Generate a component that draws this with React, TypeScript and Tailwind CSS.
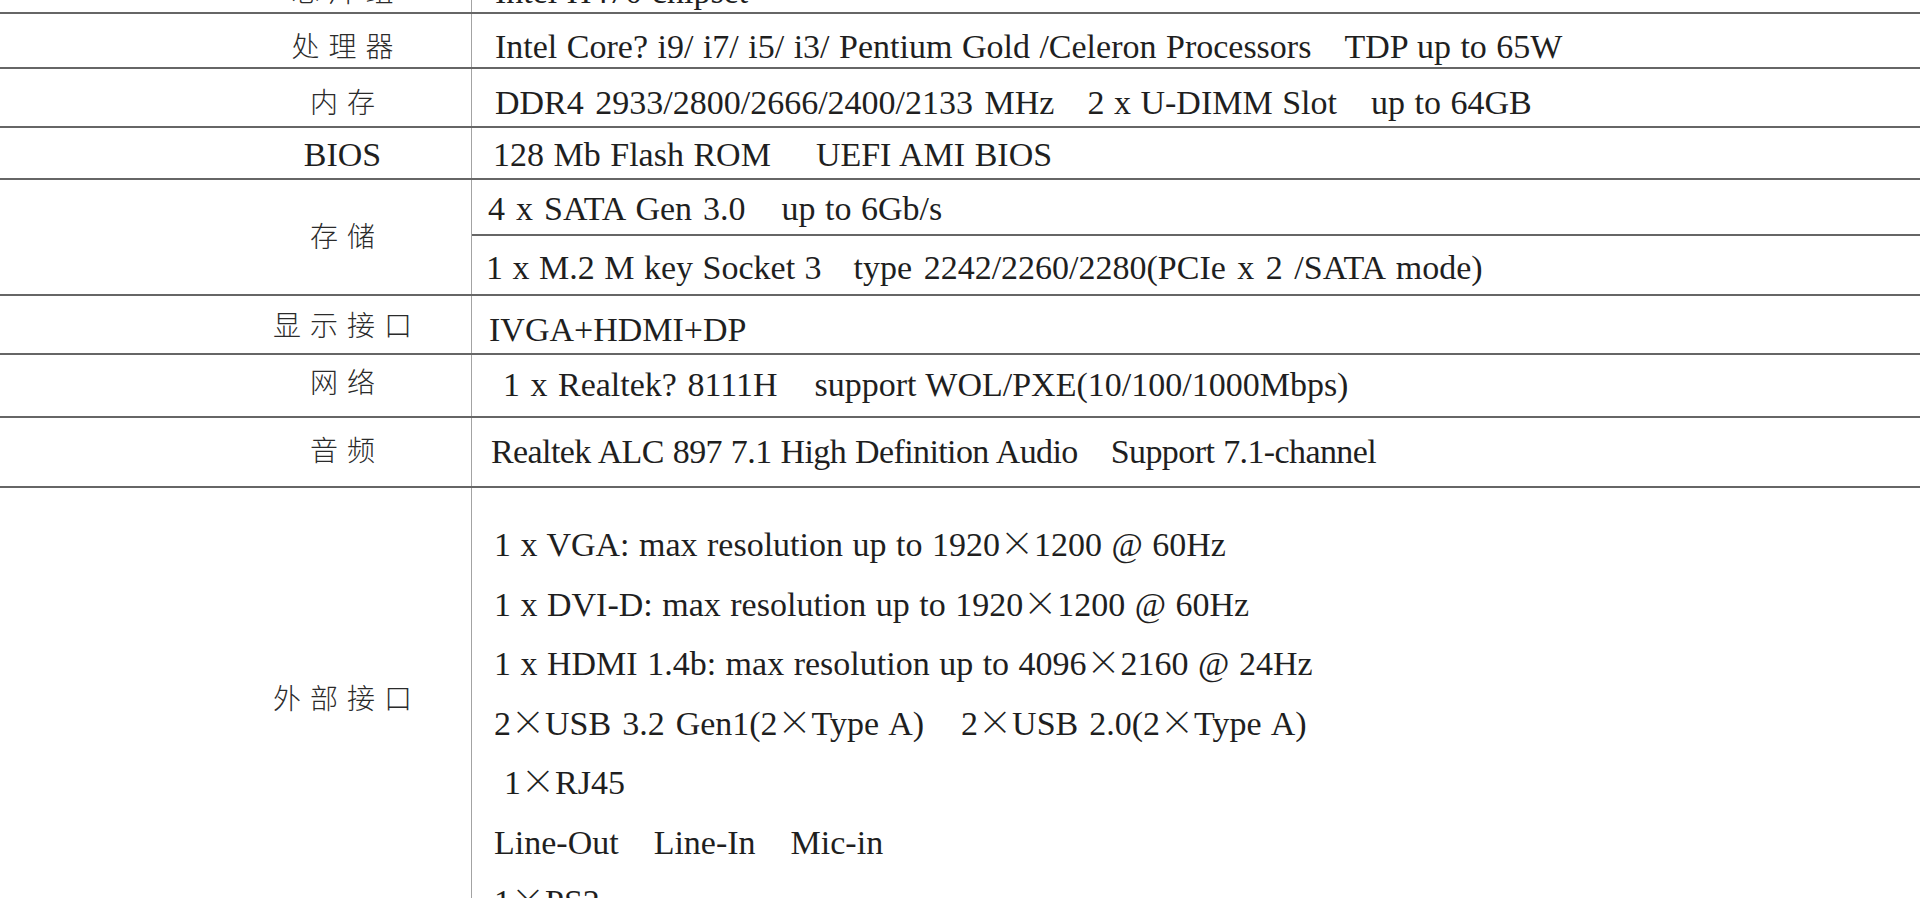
import React from "react";

const serif =
  "font-['Liberation_Serif','Times_New_Roman',serif] text-[34px] leading-[34px] text-[#1f1f1f] whitespace-nowrap [word-spacing:1px]";

const X = () => (
  <span className="inline-block w-[34px] text-center font-['Noto_Sans_CJK_SC',sans-serif] font-light leading-none [font-feature-settings:'fwid']">
    ×
  </span>
);

function Cjk({ children }: { children: React.ReactNode }) {
  return (
    <span className="inline-block font-['Noto_Sans_CJK_SC',sans-serif] font-light text-[28px] leading-[28px] tracking-[9px] -mr-[9px] text-[#2b2b2b]">
      {children}
    </span>
  );
}

function Row({
  h,
  labelCls,
  label,
  textCls,
  children,
}: {
  h: string;
  labelCls: string;
  label: React.ReactNode;
  textCls: string;
  children: React.ReactNode;
}) {
  return (
    <div className={`flex border-b-2 border-[#666666] ${h}`}>
      <div className={`w-[472px] shrink-0 border-r border-[#a3a3a3] pl-[214px] text-center ${labelCls}`}>{label}</div>
      <div className={`flex-1 ${serif} ${textCls}`}>{children}</div>
    </div>
  );
}

export default function App() {
  return (
    <div className="h-screen w-full overflow-hidden bg-white">
      <div className="-mt-[41px]">
        <Row h="h-[55px]" labelCls="pt-[17px]" label={<Cjk>芯片组</Cjk>} textCls="pl-[23px] pt-[16px]">
          Intel H470 chipset
        </Row>
        <Row h="h-[55px]" labelCls="pt-[17px]" label={<Cjk>处理器</Cjk>} textCls="pl-[23px] pt-[16px]">
          <span>Intel Core? i9/ i7/ i5/ i3/ Pentium Gold /Celeron Processors</span>
          <span className="ml-[33px]">TDP up to 65W</span>
        </Row>
        <Row h="h-[59px]" labelCls="pt-[18px]" label={<Cjk>内存</Cjk>} textCls="pl-[23px] pt-[17px]">
          <span className="[word-spacing:3px]">DDR4 2933/2800/2666/2400/2133 MHz</span>
          <span className="ml-[33px]">2 x U-DIMM Slot</span>
          <span className="ml-[34px]">up to 64GB</span>
        </Row>
        <Row
          h="h-[52px]"
          labelCls="pt-[10px]"
          label={<span className={serif}>BIOS</span>}
          textCls="pl-[21px] pt-[10px]"
        >
          <span>128 Mb Flash ROM</span>
          <span className="ml-[45px]">UEFI AMI BIOS</span>
        </Row>

        <div className="flex h-[116px] border-b-2 border-[#666666]">
          <div className="w-[472px] shrink-0 border-r border-[#a3a3a3] pl-[214px] pt-[41px] text-center">
            <Cjk>存储</Cjk>
          </div>
          <div className="flex flex-1 flex-col">
            <div className={`h-[56px] border-b-2 border-[#666666] pl-[16px] pt-[12px] ${serif}`}>
              <span className="[word-spacing:2.5px]">4 x SATA Gen 3.0</span>
              <span className="ml-[36px]">up to 6Gb/s</span>
            </div>
            <div className={`flex-1 pl-[14px] pt-[15px] ${serif}`}>
              <span>1 x M.2 M key Socket 3</span>
              <span className="ml-[32px] [word-spacing:3px]">type 2242/2260/2280(PCIe x 2 /SATA mode)</span>
            </div>
          </div>
        </div>

        <Row h="h-[59px]" labelCls="pt-[14px]" label={<Cjk>显示接口</Cjk>} textCls="pl-[17px] pt-[17px]">
          IVGA+HDMI+DP
        </Row>
        <Row h="h-[63px]" labelCls="pt-[12px]" label={<Cjk>网络</Cjk>} textCls="pl-[31px] pt-[13px]">
          <span className="[word-spacing:2px]">1 x Realtek? 8111H</span>
          <span className="ml-[37px]">support WOL/PXE(10/100/1000Mbps)</span>
        </Row>
        <Row h="h-[70px]" labelCls="pt-[17px]" label={<Cjk>音频</Cjk>} textCls="pl-[19px] pt-[17px]">
          <span className="tracking-[-0.6px]">Realtek ALC 897 7.1 High Definition Audio</span>
          <span className="ml-[33px] tracking-[-0.6px]">Support 7.1-channel</span>
        </Row>

        <div className="flex h-[520px]">
          <div className="w-[472px] shrink-0 border-r border-[#a3a3a3] pl-[214px] pt-[195px] text-center">
            <Cjk>外部接口</Cjk>
          </div>
          <div className={`flex-1 pl-[22px] pt-[27px] ${serif}`}>
            <div className="h-[59.5px] leading-[59.5px]">
              1 x VGA: max resolution up to 1920<X />1200 @ 60Hz
            </div>
            <div className="h-[59.5px] leading-[59.5px]">
              1 x DVI-D: max resolution up to 1920<X />1200 @ 60Hz
            </div>
            <div className="h-[59.5px] leading-[59.5px]">
              1 x HDMI 1.4b: max resolution up to 4096<X />2160 @ 24Hz
            </div>
            <div className="h-[59.5px] leading-[59.5px]">
              <span className="[word-spacing:2.5px]">
                2<X />USB 3.2 Gen1(2<X />Type A)
              </span>
              <span className="ml-[37px] [word-spacing:2.5px]">
                2<X />USB 2.0(2<X />Type A)
              </span>
            </div>
            <div className="h-[59.5px] pl-[10px] leading-[59.5px]">
              1<X />RJ45
            </div>
            <div className="h-[59.5px] leading-[59.5px]">
              <span>Line-Out</span>
              <span className="ml-[35px]">Line-In</span>
              <span className="ml-[35px]">Mic-in</span>
            </div>
            <div className="h-[59.5px] leading-[59.5px]">
              1<X />PS2
            </div>
          </div>
        </div>
      </div>
    </div>
  );
}
